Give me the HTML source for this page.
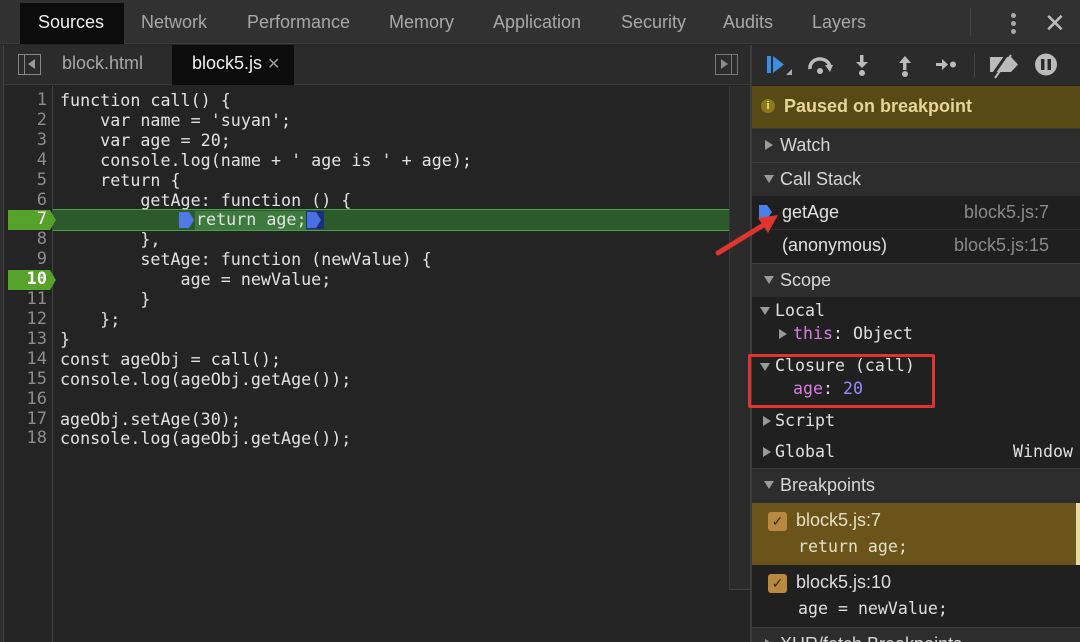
<!DOCTYPE html>
<html><head><meta charset="utf-8"><style>
*{margin:0;padding:0;box-sizing:border-box}
html,body{width:1080px;height:642px;overflow:hidden}
body{background:#242424;font-family:"Liberation Sans",sans-serif;position:relative;color:#ddd}
.a{position:absolute}
.mono{font-family:"DejaVu Sans Mono","Liberation Mono",monospace}
.tab{position:absolute;top:0;height:44px;line-height:44px;font-size:18px;color:#a8a8a8}
.code{position:absolute;left:60px;font-size:16.7px;color:#e2e2e2;white-space:pre;line-height:19.9px}
.ln{position:absolute;left:0;width:47px;text-align:right;font-size:17px;color:#8d8d8d;line-height:19.9px}
.hdr{position:absolute;left:752px;width:328px;background:#2d2d2d;border-top:1px solid #3c3c3c;font-size:18px;color:#d6d6d6;overflow:hidden}
.tri{display:inline-block;width:0;height:0;border-left:5px solid transparent;border-right:5px solid transparent;border-top:8px solid #9a9a9a;margin:0 6px 2px 12px}
.trr{display:inline-block;width:0;height:0;border-top:5px solid transparent;border-bottom:5px solid transparent;border-left:8px solid #9a9a9a;margin:0 7px 1px 13px}
.sc{position:absolute;font-size:16.6px;color:#e0e0e0;white-space:pre}
.cb{position:absolute;left:768px;width:19px;height:19px;background:#b8893f;border-radius:3px;color:#3a2a10;font-size:14px;text-align:center;line-height:19px}
</style></head><body>
<div class="a" style="left:0;top:0;width:1080px;height:44px;background:#313131;border-bottom:1px solid #3d3d3d"></div>
<div class="a" style="left:20px;top:3px;width:104px;height:41px;background:#0c0c0c"></div>
<div class="tab" style="left:38px;color:#f0f0f0">Sources</div>
<div class="tab" style="left:141px">Network</div>
<div class="tab" style="left:247px">Performance</div>
<div class="tab" style="left:389px">Memory</div>
<div class="tab" style="left:493px">Application</div>
<div class="tab" style="left:621px">Security</div>
<div class="tab" style="left:723px">Audits</div>
<div class="tab" style="left:812px">Layers</div>
<div class="a" style="left:970px;top:8px;width:1px;height:28px;background:#444"></div>
<div class="a" style="left:1011px;top:13px;width:5px;height:5px;border-radius:3px;background:#aaa"></div>
<div class="a" style="left:1011px;top:21px;width:5px;height:5px;border-radius:3px;background:#aaa"></div>
<div class="a" style="left:1011px;top:29px;width:5px;height:5px;border-radius:3px;background:#aaa"></div>
<div class="a" style="left:1044px;top:8px;font-size:26px;color:#bbb">✕</div>
<div class="a" style="left:4px;top:45px;width:746px;height:40px;background:#2b2b2b;border-bottom:1px solid #3a3a3a"></div>
<div class="a" style="left:0;top:45px;width:4px;height:597px;background:#2e2e2e;border-right:1px solid #444"></div>
<div class="a" style="left:18px;top:54px;width:23px;height:21px;border:1px solid #888"></div>
<div class="a" style="left:24px;top:54px;width:1px;height:21px;background:#888"></div>
<div class="a" style="left:28px;top:59px;border-top:5px solid transparent;border-bottom:5px solid transparent;border-right:7px solid #999"></div>
<div class="a" style="left:62px;top:53px;font-size:18px;color:#a8a8a8">block.html</div>
<div class="a" style="left:172px;top:45px;width:122px;height:40px;background:#0c0c0c"></div>
<div class="a" style="left:192px;top:53px;font-size:18px;color:#f0f0f0">block5.js <span style="color:#999;font-size:16px">✕</span></div>
<div class="a" style="left:715px;top:54px;width:23px;height:21px;border:1px solid #777"></div>
<div class="a" style="left:731px;top:54px;width:1px;height:21px;background:#777"></div>
<div class="a" style="left:721px;top:59px;border-top:5px solid transparent;border-bottom:5px solid transparent;border-left:7px solid #888"></div>
<div class="a" style="left:52px;top:86px;width:1px;height:556px;background:#444"></div>
<div class="a" style="left:729px;top:86px;width:21px;height:504px;background:#2b2b2b;border-left:1px solid #3a3a3a;border-bottom:1px solid #444"></div>
<div class="a" style="left:53px;top:209px;width:676px;height:22px;background:#2c5a2c;border-top:1px solid #4aa34a;border-bottom:1px solid #4aa34a"></div>
<svg class="a" style="left:8px;top:210px" width="50" height="20"><path d="M0 0H42L48 10L42 20H0Z" fill="#56a22b"/></svg>
<svg class="a" style="left:8px;top:270px" width="50" height="20"><path d="M0 0H42L48 10L42 20H0Z" fill="#56a22b"/></svg>
<svg class="a" style="left:179px;top:212px" width="16" height="16"><path d="M0 0H10L15 8L10 16H0Z" fill="#4f7ae6"/></svg>
<div class="a" style="left:195px;top:211px;width:111px;height:19px;background:#3d7a3d"></div>
<svg class="a" style="left:306px;top:211px" width="18" height="18"><rect width="18" height="18" fill="#1c2f7a"/><path d="M1 1H10L15 9L10 17H1Z" fill="#4a6fe0"/></svg>
<div class="ln mono" style="top:91px">1<br>2<br>3<br>4<br>5<br>6<br><span style="color:#fff">7</span><br>8<br>9<br><b style="color:#fff">10</b><br>11<br>12<br>13<br>14<br>15<br>16<br>17<br>18</div>
<div class="code mono" style="top:91px">function call() {
    var name = 'suyan';
    var age = 20;
    console.log(name + ' age is ' + age);
    return {
        getAge: function () {

        },
        setAge: function (newValue) {
            age = newValue;
        }
    };
}
const ageObj = call();
console.log(ageObj.getAge());

ageObj.setAge(30);
console.log(ageObj.getAge());</div>
<div class="code mono" style="top:210px;left:196px">return age;</div>
<div class="a" style="left:750px;top:45px;width:2px;height:597px;background:#3c3c3c"></div>
<div class="a" style="left:752px;top:45px;width:328px;height:40px;background:#2b2b2b"></div>
<svg class="a" style="left:752px;top:45px" width="328" height="40">
<rect x="15" y="11" width="4" height="17" fill="#3d8ee0"/><path d="M21 11L32 19.5L21 28Z" fill="#3d8ee0"/><path d="M34 30L40 24V30Z" fill="#aaa"/>
<path d="M58 24A10 9 0 0 1 78 22" stroke="#bbb" stroke-width="3.5" fill="none"/><path d="M73 20L81 20L78 27Z" fill="#bbb"/><circle cx="68" cy="26" r="3" fill="#bbb"/>
<rect x="108" y="10" width="3.5" height="10" fill="#bbb"/><path d="M104 17H116L110 23Z" fill="#bbb"/><circle cx="110" cy="28" r="3" fill="#bbb"/>
<rect x="151" y="15" width="3.5" height="10" fill="#bbb"/><path d="M147 18H159L153 11Z" fill="#bbb"/><circle cx="153" cy="29" r="3" fill="#bbb"/>
<rect x="184" y="18" width="8" height="3" fill="#bbb"/><path d="M190 14L196 19.5L190 25Z" fill="#bbb"/><circle cx="201" cy="19.5" r="3" fill="#bbb"/>
<rect x="222" y="8" width="1" height="24" fill="#444"/>
<path d="M238 12H259L266 19.5L259 27H238Z" fill="#bbb"/><path d="M240 31L256 8" stroke="#2b2b2b" stroke-width="3"/><path d="M243 33L259 10" stroke="#bbb" stroke-width="2"/>
<circle cx="294" cy="19.5" r="11" fill="#bbb"/><rect x="289" y="14" width="3.5" height="11" fill="#2b2b2b"/><rect x="295.5" y="14" width="3.5" height="11" fill="#2b2b2b"/>
</svg>
<div class="a" style="left:752px;top:86px;width:328px;height:42px;background:#574a14"></div>
<div class="a" style="left:761px;top:99px;width:14px;height:14px;border-radius:7px;background:#8b7a1c;color:#f2e08a;font-size:11px;font-weight:bold;text-align:center;line-height:14px">i</div>
<div class="a" style="left:784px;top:96px;font-size:18px;font-weight:bold;color:#e6d59a">Paused on breakpoint</div>
<div class="hdr" style="top:128px;height:34px;line-height:33px"><span class="trr"></span>Watch</div>
<div class="hdr" style="top:162px;height:34px;line-height:33px"><span class="tri"></span>Call Stack</div>
<div class="a" style="left:752px;top:196px;width:328px;height:67px;background:#1f1f1f"></div>
<div class="a" style="left:752px;top:229px;width:328px;height:1px;background:#2c2c2c"></div>
<svg class="a" style="left:759px;top:205px" width="14" height="14"><path d="M0 0H8L13 7L8 14H0Z" fill="#4a80e8"/></svg>
<div class="a" style="left:782px;top:202px;font-size:18px;color:#e0e0e0">getAge</div>
<div class="a" style="left:964px;top:202px;font-size:18px;color:#8a8a8a">block5.js:7</div>
<div class="a" style="left:782px;top:235px;font-size:18px;color:#e0e0e0">(anonymous)</div>
<div class="a" style="left:954px;top:235px;font-size:18px;color:#8a8a8a">block5.js:15</div>
<div class="hdr" style="top:263px;height:34px;line-height:33px"><span class="tri"></span>Scope</div>
<div class="a" style="left:752px;top:297px;width:328px;height:171px;background:#202020"></div>
<span class="a" style="left:760px;top:307px;border-left:5px solid transparent;border-right:5px solid transparent;border-top:8px solid #9a9a9a"></span>
<div class="sc mono" style="left:775px;top:301px">Local</div>
<span class="a" style="left:779px;top:329px;border-top:5px solid transparent;border-bottom:5px solid transparent;border-left:8px solid #9a9a9a"></span>
<div class="sc mono" style="left:793px;top:324px"><span style="color:#d77ee0">this</span>: Object</div>
<span class="a" style="left:760px;top:363px;border-left:5px solid transparent;border-right:5px solid transparent;border-top:8px solid #9a9a9a"></span>
<div class="sc mono" style="left:775px;top:356px">Closure (call)</div>
<div class="sc mono" style="left:793px;top:379px"><span style="color:#d77ee0">age</span>: <span style="color:#9a8cff">20</span></div>
<span class="a" style="left:763px;top:416px;border-top:5px solid transparent;border-bottom:5px solid transparent;border-left:8px solid #9a9a9a"></span>
<div class="sc mono" style="left:775px;top:411px">Script</div>
<span class="a" style="left:763px;top:447px;border-top:5px solid transparent;border-bottom:5px solid transparent;border-left:8px solid #9a9a9a"></span>
<div class="sc mono" style="left:775px;top:442px">Global</div>
<div class="sc mono" style="left:1013px;top:442px">Window</div>
<div class="a" style="left:748px;top:354px;width:187px;height:54px;border:3.5px solid #e0352f;border-radius:2px"></div>
<div class="hdr" style="top:468px;height:35px;line-height:33px"><span class="tri"></span>Breakpoints</div>
<div class="a" style="left:752px;top:503px;width:324px;height:62px;background:#6a5419"></div>
<div class="a" style="left:1076px;top:503px;width:4px;height:62px;background:#e8d9a0"></div>
<div class="cb" style="top:512px">✓</div>
<div class="a" style="left:796px;top:510px;font-size:18px;color:#e6e0c8">block5.js:7</div>
<div class="sc mono" style="left:798px;top:537px;color:#e6e0c8">return age;</div>
<div class="a" style="left:752px;top:565px;width:328px;height:62px;background:#202020"></div>
<div class="cb" style="top:574px">✓</div>
<div class="a" style="left:796px;top:572px;font-size:18px;color:#ddd">block5.js:10</div>
<div class="sc mono" style="left:798px;top:599px">age = newValue;</div>
<div class="hdr" style="top:627px;height:15px;line-height:33px"><span class="trr"></span>XHR/fetch Breakpoints</div>
<svg class="a" style="left:700px;top:195px" width="100" height="75"><path d="M18 58L70 26" stroke="#e0352f" stroke-width="5" stroke-linecap="round"/><path d="M78 20L58 23L68 38Z" fill="#e0352f"/></svg>
</body></html>
